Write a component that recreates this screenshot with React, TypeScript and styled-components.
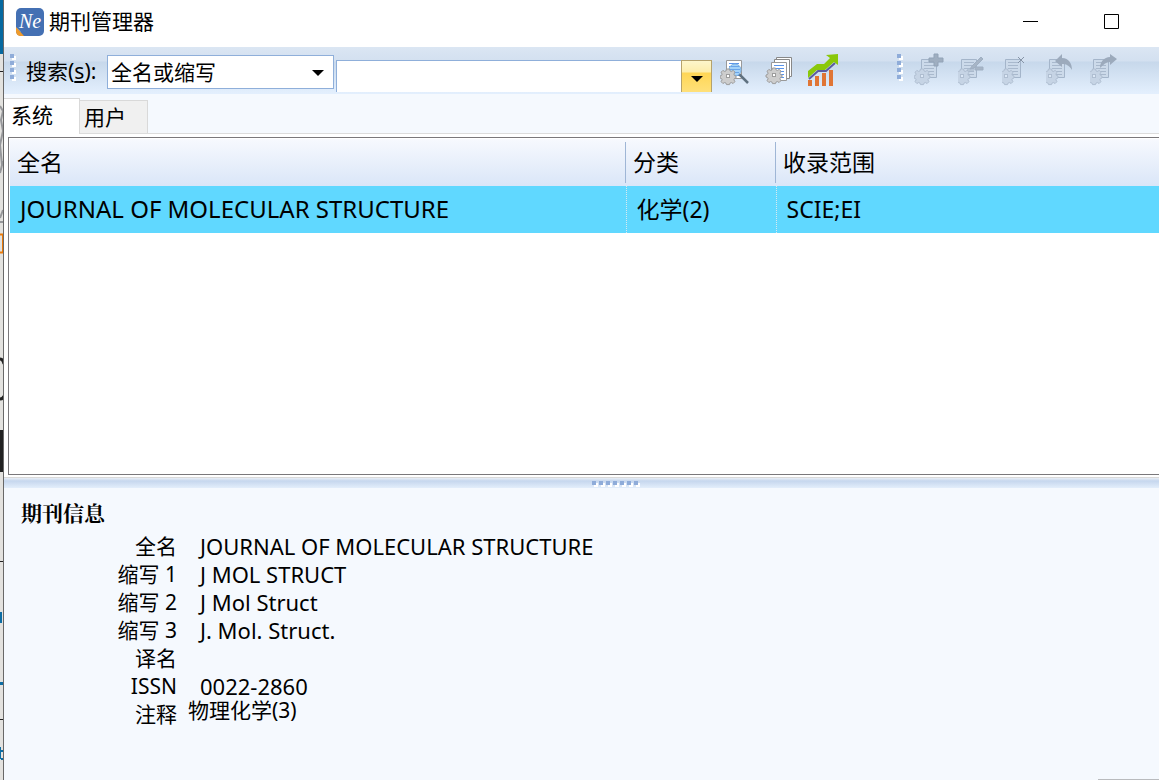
import React, { useState } from "react";
import styled, { createGlobalStyle } from "styled-components";

const GlobalStyle = createGlobalStyle`
  *, *::before, *::after { box-sizing: border-box; }
  body {
    margin: 0;
    background: #e3e2df;
    color: #000;
    font-family: "Noto Sans", "Noto Sans CJK SC", sans-serif;
    font-size: 21px;
    line-height: 28px;
    overflow: hidden;
  }
  button, input, select { font: inherit; color: inherit; }
`;

const Desktop = styled.div`
  display: flex;
  height: 100vh;
`;

const Backdrop = styled.svg`
  flex: none;
  width: 4px;
  height: 780px;
  display: block;
`;

const Window = styled.div`
  flex: 1;
  min-width: 0;
  display: flex;
  flex-direction: column;
  background: #f5f9fe;
`;

const TitleBar = styled.header`
  display: flex;
  align-items: center;
  flex: none;
  height: 47px;
  padding: 0 26px 4px 12px;
  background: #fff;
`;

const Title = styled.h1`
  flex: 1;
  margin: 0 0 0 5px;
  padding-bottom: 2px;
  font-size: 21px;
  font-weight: 400;
`;

const WindowButton = styled.button`
  display: flex;
  align-items: center;
  justify-content: center;
  width: 43px;
  height: 32px;
  margin-left: 38px;
  padding: 0;
  border: 0;
  background: none;
`;

const ToolBar = styled.div`
  display: flex;
  flex: none;
  height: 47px;
  padding-left: 6px;
  background: linear-gradient(#dbe6f3 0, #d3e0f0 14px, #c7d8eb 15px, #e3effd 46px);
`;

const Grip = styled.svg`
  flex: none;
  display: block;
`;

const SearchLabel = styled.label`
  padding: 10px 0 0 9px;
  width: 90px;
  white-space: nowrap;
`;

const SelectBox = styled.div`
  position: relative;
  width: 227px;
  height: 34px;
  margin-top: 8px;
`;

const Select = styled.select`
  appearance: none;
  width: 100%;
  height: 100%;
  padding: 0 24px 0 3px;
  border: 1px solid #8fafda;
  border-radius: 0;
  background: #fff;
  outline: 0;
`;

const SelectArrow = styled.svg`
  position: absolute;
  right: 10px;
  top: 15px;
  pointer-events: none;
`;

const Query = styled.div`
  display: flex;
  width: 376px;
  height: 32px;
  margin: 13px 0 0 2px;
`;

const QueryInput = styled.input`
  flex: 1;
  min-width: 0;
  padding: 0 4px;
  border: 1px solid #8fafda;
  border-width: 1px 0 0 1px;
  background: #fff;
  outline: 0;
`;

const QueryButton = styled.button`
  display: flex;
  align-items: center;
  justify-content: center;
  width: 31px;
  padding: 5px 0 0;
  border: 1px solid #b5a26c;
  border-bottom: 0;
  background: linear-gradient(#fdf6cb 0, #fdedab 11px, #ffd655 12px, #ffe17c 32px);
`;

const ToolGroup = styled.div<{ $start: number }>`
  display: flex;
  gap: 12px;
  margin: 5px 0 0 ${(p) => p.$start}px;
`;

const ToolButton = styled.button`
  width: 32px;
  height: 36px;
  padding: 0;
  border: 0;
  background: none;
  svg { display: block; }
`;

const Tabs = styled.div`
  display: flex;
  flex: none;
  align-items: flex-end;
  height: 40px;
  border-bottom: 1px solid #dcdcdc;
`;

const Tab = styled.button<{ $active: boolean }>`
  width: ${(p) => (p.$active ? 76 : 68)}px;
  height: ${(p) => (p.$active ? 36 : 33)}px;
  margin-bottom: ${(p) => (p.$active ? -1 : 0)}px;
  padding: ${(p) => (p.$active ? "0 0 3px 7px" : "0 0 0 4px")};
  border: 1px solid #d9d9d9;
  border-width: 1px 1px 0 0;
  background: ${(p) => (p.$active ? "#fff" : "#f0f0f0")};
  text-align: left;
`;

const ListPane = styled.main`
  flex: none;
  padding: 3px 0 2px 4px;
  background: #fff;
  border-bottom: 1px solid #d9d9d9;
`;

const ListFrame = styled.div`
  height: 338px;
  padding: 1px 0 0 1px;
  border: 1px solid #7a787b;
  border-right: 0;
  background: #fff;
`;

const Table = styled.table`
  width: 100%;
  border-collapse: collapse;
  table-layout: fixed;
  font-size: 23px;
`;

const HeadRow = styled.tr`
  height: 47px;
  background: linear-gradient(#f7f9fe, #dae6f8);
`;

const HeadCell = styled.th<{ $width?: number }>`
  width: ${(p) => (p.$width ? `${p.$width}px` : "auto")};
  padding: 0 0 2px 7px;
  font-weight: 400;
  text-align: left;
  background: linear-gradient(#9fb6d6, #9fb6d6) right 0 top 3px / 1px 41px no-repeat;
  &:last-child { background: none; }
`;

const Row = styled.tr`
  height: 47px;
  background: #60d8ff;
`;

const Cell = styled.td<{ $name?: boolean }>`
  padding: 0 0 2px 10px;
  font-size: ${(p) => (p.$name ? 24 : 23)}px;
  white-space: nowrap;
  border-right: 1px dotted #d9e9ef;
  &:last-child { border-right: 0; }
`;

const Splitter = styled.div`
  display: flex;
  justify-content: center;
  flex: none;
  height: 10px;
  padding: 3px 0 0 69px;
  background: linear-gradient(#e8eef6 0, #c6d7ee 3px, #e3eefb 10px);
`;

const Info = styled.section`
  flex: 1;
  padding: 10px 17px 0;
`;

const InfoTitle = styled.h2`
  margin: 0 0 6px;
  font-family: "Noto Serif CJK SC", "Noto Sans CJK SC", serif;
  font-size: 21px;
  font-weight: 700;
`;

const Fields = styled.dl`
  display: grid;
  grid-template-columns: 156px 1fr;
  grid-auto-rows: 28px;
  margin: 0;
`;

const Term = styled.dt`
  text-align: right;
  white-space: nowrap;
`;

const Value = styled.dd<{ $note?: boolean }>`
  margin: 0 0 0 ${(p) => (p.$note ? 11 : 23)}px;
  font-size: ${(p) => (p.$note ? 21 : 22)}px;
  line-height: ${(p) => (p.$note ? 20 : 28)}px;
  white-space: nowrap;
`;

const StatusEdge = styled.footer`
  flex: none;
  align-self: flex-end;
  width: 61px;
  border-top: 1px solid #b9bbbe;
`;

const DownArrow = () => <path d="M0 0h12l-6 6z" fill="#000" />;

function Dots({ count, vertical }: { count: number; vertical?: boolean }) {
  const length = count * 7;
  return (
    <Grip width={vertical ? 7 : length} height={vertical ? length + 2 : 7} shapeRendering="crispEdges" aria-hidden="true">
      {Array.from({ length: count }, (_, i) => {
        const x = vertical ? 0 : i * 7;
        const y = vertical ? i * 7 + 2 : 0;
        return (
          <g key={i}>
            <rect x={x + 2} y={y + 2} width="4" height="4" fill="#fff" />
            <rect x={x} y={y} width="4" height="4" fill="#8facd9" />
          </g>
        );
      })}
    </Grip>
  );
}

function Gear({ x, y, muted }: { x: number; y: number; muted?: boolean }) {
  const fill = muted ? "#c6d4e5" : "#cdcdcd";
  const stroke = muted ? "#afbed1" : "#9c9c9c";
  return (
    <g transform={`translate(${x} ${y})`}>
      <path
        d="M-1.500-7h3l.6 2 1.200.5 1.900-1.100 1.800 1.800-1.100 1.900.5 1.300 1.600.6v2l-1.600.6-.5 1.200 1 1.900-1.800 1.800-1.800-1-1.200.5-.6 1.600h-3l-.6-1.600-1.200-.5-1.800 1-1.800-1.800 1-1.900-.5-1.200-1.600-.6v-2l1.600-.6.5-1.300-1-1.900 1.800-1.800 1.800 1.100 1.200-.5z"
        fill={fill}
        stroke={stroke}
      />
      <rect x="-1.500" y="-1.500" width="3" height="3" fill={muted ? "#dce8f6" : "#fff"} stroke={stroke} />
    </g>
  );
}

function Sheet({ x, y, muted }: { x: number; y: number; muted?: boolean }) {
  return (
    <g transform={`translate(${x} ${y})`}>
      <path d="M.5.5h15v18H.5z" fill={muted ? "#ccdaea" : "#fff"} stroke={muted ? "#a4b5ca" : "#999"} />
      <path d="M3 3.500h10M3 6.500h10M3 9.500h10M3 12.500h10M3 15.500h10" stroke={muted ? "#a9b9cd" : "#5a94ea"} />
    </g>
  );
}

const SearchIcon = () => (
  <svg width="32" height="36" aria-hidden="true">
    <Sheet x={6} y={8} />
    <path d="M19 22l9 9" stroke="#5f7180" strokeWidth="2.500" />
    <circle cx="15" cy="18" r="6" fill="#a4d2f8" stroke="#79afe0" />
    <path d="M11 14.500h8M10 17.500h10M11 20.500h8" stroke="#6aa5ea" />
    <Gear x={8} y={24} />
  </svg>
);

const CopiesIcon = () => (
  <svg width="32" height="36" aria-hidden="true">
    <path d="M12.500 5.500h15v19h-15z" fill="#fff" stroke="#888" />
    <path d="M10.500 7.500h15v19h-15z" fill="#fff" stroke="#888" />
    <Sheet x={7} y={10} />
    <Gear x={10} y={23} />
  </svg>
);

const ChartIcon = () => (
  <svg width="32" height="36" aria-hidden="true">
    <path d="M0 28h4v6H0zM7 24h4v10H7zM14 21h4v13h-4zM21 18h4v16h-4z" fill="#e07535" />
    <path d="M1 27l9-8h8l9-8" fill="none" stroke="#5b5ca2" strokeWidth="2" />
    <path d="M0 26v-7l9-7h7l6-6-4-3 12-1v11l-4-3-9 8H9z" fill="#8ac80a" />
  </svg>
);

const EDIT_MARKS = {
  add: <path d="M20 2h4v4h5v4h-5v4h-4v-4h-5V6h5z" fill="#9faec0" stroke="#92a3b7" />,
  edit: <path d="M14 14L23 5l2 2-9 9-4 1zM9 18h7M17 15h8v3h-8z" fill="#a7b5c6" stroke="#9fafc2" />,
  remove: <path d="M16 5l6 6M22 5l-6 6" stroke="#8694a6" fill="none" />,
  undo: <path d="M9 9l7-7v4c7 0 10 6 10 12-3-5-6-6-10-6v3z" fill="#9caabc" />,
  redo: <path d="M10 16c0-6 4-11 10-11V2l7 5-7 6v-3c-4 0-6 2-10 6z" fill="#9caabc" />,
};

function EditIcon({ kind }: { kind: keyof typeof EDIT_MARKS }) {
  const left = kind === "add" ? 7 : 3;
  return (
    <svg width="32" height="36" aria-hidden="true">
      <Sheet x={left} y={7} muted />
      <Gear x={left + 1} y={24} muted />
      {EDIT_MARKS[kind]}
    </svg>
  );
}

const AppLogo = () => (
  <svg width="28" height="28" aria-hidden="true">
    <rect width="28" height="28" rx="5" fill="#4470b3" />
    <path d="M0 19l8 9H5q-5 0-5-5z" fill="#f09b2b" />
    <path d="M0 19q4 3 8 9l-3-4z" fill="#fff3dd" />
    <text x="3" y="20" fill="#fff" fontFamily="Liberation Serif, serif" fontStyle="italic" fontSize="20">Ne</text>
  </svg>
);

const TABS = ["系统", "用户"];

const FIELDS = [
  { label: "全名", value: "JOURNAL OF MOLECULAR STRUCTURE" },
  { label: "缩写 1", value: "J MOL STRUCT" },
  { label: "缩写 2", value: "J Mol Struct" },
  { label: "缩写 3", value: "J. Mol. Struct." },
  { label: "译名", value: "" },
  { label: "ISSN", value: "0022-2860" },
  { label: "注释", value: "物理化学(3)", note: true },
];

const EDIT_TOOLS: { kind: keyof typeof EDIT_MARKS; label: string }[] = [
  { kind: "add", label: "添加" },
  { kind: "edit", label: "编辑" },
  { kind: "remove", label: "删除" },
  { kind: "undo", label: "导入" },
  { kind: "redo", label: "导出" },
];

export default function App() {
  const [tab, setTab] = useState(0);
  return (
    <Desktop>
      <GlobalStyle />
      <Backdrop viewBox="0 0 4 780" aria-hidden="true">
        <rect width="4" height="780" fill="#e3e2df" />
        <rect width="4" height="54" fill="#0669a0" />
        <path d="M0 71.500h4M0 561.500h4M0 719.500h4" stroke="#222" />
        <path d="M0 106l3 5-2 9 2 11-3 14 2 20M0 173l3-12M0 218l3-8M0 222h3" fill="none" stroke="#96979a" strokeWidth="2" />
        <path d="M0 234.500h3v18H0" fill="none" stroke="#ec7a08" strokeWidth="2" />
        <path d="M0 359q3 0 4 5M0 399q3 0 4-3" fill="none" stroke="#222" strokeWidth="3" />
        <path d="M0 430h3v42H0z" fill="#222" />
        <path d="M0 612h2v11H0zM0 682h4v3H0zM0 747h1v12H0zM1 750h2v2H1zM1 758h3v2H1z" fill="#0c6da4" />
        <path d="M3.500 0v780" stroke="#686868" />
      </Backdrop>
      <Window>
        <TitleBar>
          <AppLogo />
          <Title>期刊管理器</Title>
          <WindowButton aria-label="最小化">
            <svg width="15" height="15"><path d="M0 7.500h15" stroke="#000" /></svg>
          </WindowButton>
          <WindowButton aria-label="最大化">
            <svg width="15" height="15"><path d="M.5.5h14v14H.5z" fill="none" stroke="#000" /></svg>
          </WindowButton>
        </TitleBar>
        <ToolBar>
          <ToolGroup $start={0}>
            <Dots count={4} vertical />
          </ToolGroup>
          <SearchLabel htmlFor="scope">
            搜索(<u>s</u>):
          </SearchLabel>
          <SelectBox>
            <Select id="scope">
              <option>全名或缩写</option>
            </Select>
            <SelectArrow width="12" height="6" aria-hidden="true"><DownArrow /></SelectArrow>
          </SelectBox>
          <Query>
            <QueryInput aria-label="搜索内容" />
            <QueryButton aria-label="搜索记录">
              <svg width="12" height="6"><DownArrow /></svg>
            </QueryButton>
          </Query>
          <ToolGroup $start={8}>
            <ToolButton aria-label="查找"><SearchIcon /></ToolButton>
            <ToolButton aria-label="全部"><CopiesIcon /></ToolButton>
            <ToolButton aria-label="影响因子"><ChartIcon /></ToolButton>
          </ToolGroup>
          <ToolGroup $start={57}>
            <Dots count={4} vertical />
          </ToolGroup>
          <ToolGroup $start={10}>
            {EDIT_TOOLS.map((t) => (
              <ToolButton key={t.kind} aria-label={t.label} disabled>
                <EditIcon kind={t.kind} />
              </ToolButton>
            ))}
          </ToolGroup>
        </ToolBar>
        <Tabs role="tablist">
          {TABS.map((name, i) => (
            <Tab key={name} role="tab" aria-selected={i === tab} $active={i === tab} onClick={() => setTab(i)}>
              {name}
            </Tab>
          ))}
        </Tabs>
        <ListPane>
          <ListFrame>
            <Table>
              <thead>
                <HeadRow>
                  <HeadCell $width={616}>全名</HeadCell>
                  <HeadCell $width={150}>分类</HeadCell>
                  <HeadCell>收录范围</HeadCell>
                </HeadRow>
              </thead>
              <tbody>
                <Row>
                  <Cell $name>JOURNAL OF MOLECULAR STRUCTURE</Cell>
                  <Cell>化学(2)</Cell>
                  <Cell>SCIE;EI</Cell>
                </Row>
              </tbody>
            </Table>
          </ListFrame>
        </ListPane>
        <Splitter>
          <Dots count={7} />
        </Splitter>
        <Info>
          <InfoTitle>期刊信息</InfoTitle>
          <Fields>
            {FIELDS.map((f) => (
              <React.Fragment key={f.label}>
                <Term>{f.label}</Term>
                <Value $note={f.note}>{f.value}</Value>
              </React.Fragment>
            ))}
          </Fields>
        </Info>
        <StatusEdge />
      </Window>
    </Desktop>
  );
}
